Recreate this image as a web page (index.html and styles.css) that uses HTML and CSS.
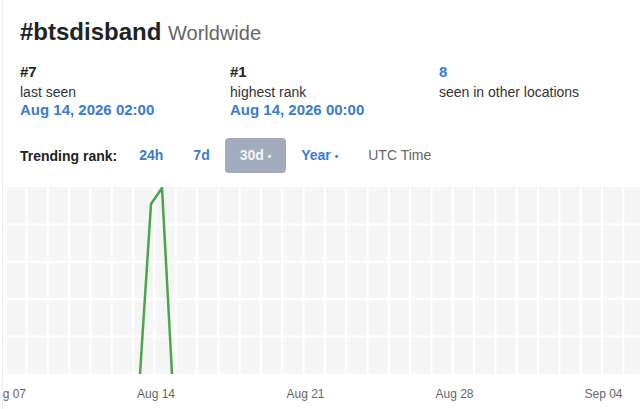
FILE: index.html
```html
<!DOCTYPE html>
<html lang="en">
<head>
  <meta charset="UTF-8">
  <meta name="viewport" content="width=device-width, initial-scale=1.0">
  <title>#btsdisband Worldwide</title>

  <link rel="stylesheet" href="styles.css">
</head>
<body>

  <div class="card">
    <div class="head">
      <h1 class="title">#btsdisband <span class="place">Worldwide</span></h1>

      <div class="stats">
        <div>
          <div class="value">#7</div>
          <div class="label">last seen</div>
          <div class="date">Aug 14, 2026 02:00</div>
        </div>
        <div>
          <div class="value">#1</div>
          <div class="label">highest rank</div>
          <div class="date">Aug 14, 2026 00:00</div>
        </div>
        <div>
          <div class="value blue">8</div>
          <div class="label">seen in other locations</div>
        </div>
      </div>

      <div class="ranges">
        <span class="ranges-title">Trending rank:</span>
        <button class="range">24h</button>
        <button class="range">7d</button>
        <button class="range active">30d <span class="dot">•</span></button>
        <button class="range">Year <span class="dot">•</span></button>
        <button class="range utc">UTC Time</button>
      </div>
    </div>

    <svg class="chart" width="637" height="214" viewBox="3 186 637 214">
      <rect x="7" y="186" width="633" height="187" fill="#f5f5f5"/>
      <path class="grid" d="M26.6 186V373M47.9 186V373M69.2 186V373M90.5 186V373M111.9 186V373M133.2 186V373M154.5 186V373M175.8 186V373M197.1 186V373M218.4 186V373M239.7 186V373M261 186V373M282.3 186V373M303.6 186V373M324.9 186V373M346.3 186V373M367.6 186V373M388.9 186V373M410.2 186V373M431.5 186V373M452.8 186V373M474.1 186V373M495.4 186V373M516.7 186V373M538.1 186V373M559.4 186V373M580.7 186V373M602 186V373M623.3 186V373M7 223.4H640M7 260.8H640M7 298.2H640M7 335.6H640"/>
      <polyline class="line" points="140,373 151,203 162,187 172,373"/>
      <text class="tick" x="7" y="397">Aug 07</text>
      <text class="tick" x="156" y="397">Aug 14</text>
      <text class="tick" x="305.5" y="397">Aug 21</text>
      <text class="tick" x="454.5" y="397">Aug 28</text>
      <text class="tick" x="603.5" y="397">Sep 04</text>
    </svg>
  </div>

</body>
</html>
```

FILE: styles.css
```css
body {
  margin: 0;
  background-color: white;
  font-family: "Liberation Sans", Arial, sans-serif;
  color: #222;
  overflow: hidden;
}

.card {
  margin-left: 2px;
  border-left: 1px solid #ececec;
  height: 409px;
}

.head {
  padding: 18px 0 0 17px;
}

.title {
  margin: 0;
  font-size: 24px;
  line-height: 28px;
  font-weight: bold;
  color: #222;
}

.place {
  font-size: 20px;
  font-weight: normal;
  color: #666;
}

.stats {
  display: grid;
  grid-template-columns: 210px 209px auto;
  margin-top: 15px;
}

.value {
  font-size: 15px;
  font-weight: bold;
  line-height: 20px;
  margin-bottom: 2px;
}

.label {
  font-size: 14px;
  line-height: 17px;
  color: #333;
}

.date {
  font-size: 15px;
  font-weight: bold;
  line-height: 17px;
  color: #3a7bd5;
}

.blue {
  color: #3a7bd5;
}

.ranges {
  display: flex;
  align-items: center;
  margin-top: 20px;
}

.ranges-title {
  font-size: 14px;
  font-weight: bold;
  margin-right: 7px;
}

.range {
  font-family: inherit;
  font-size: 14px;
  font-weight: bold;
  line-height: 35px;
  height: 35px;
  padding: 0 15px;
  margin: 0;
  border: none;
  border-radius: 4px;
  background: none;
  color: #3a7bd5;
  cursor: pointer;
}

.range.active {
  background-color: #a3acba;
  color: #f5f6f8;
}

.range.utc {
  font-weight: normal;
  color: #666;
}

.dot {
  font-size: 10px;
}

.chart {
  display: block;
  margin-top: 14px;
}

.grid {
  stroke: white;
  stroke-width: 2;
  fill: none;
}

.line {
  fill: none;
  stroke: #4ba54b;
  stroke-width: 2.5;
  stroke-linejoin: round;
}

.tick {
  font-family: "Liberation Sans", Arial, sans-serif;
  font-size: 12px;
  fill: #666;
  text-anchor: middle;
}
```
